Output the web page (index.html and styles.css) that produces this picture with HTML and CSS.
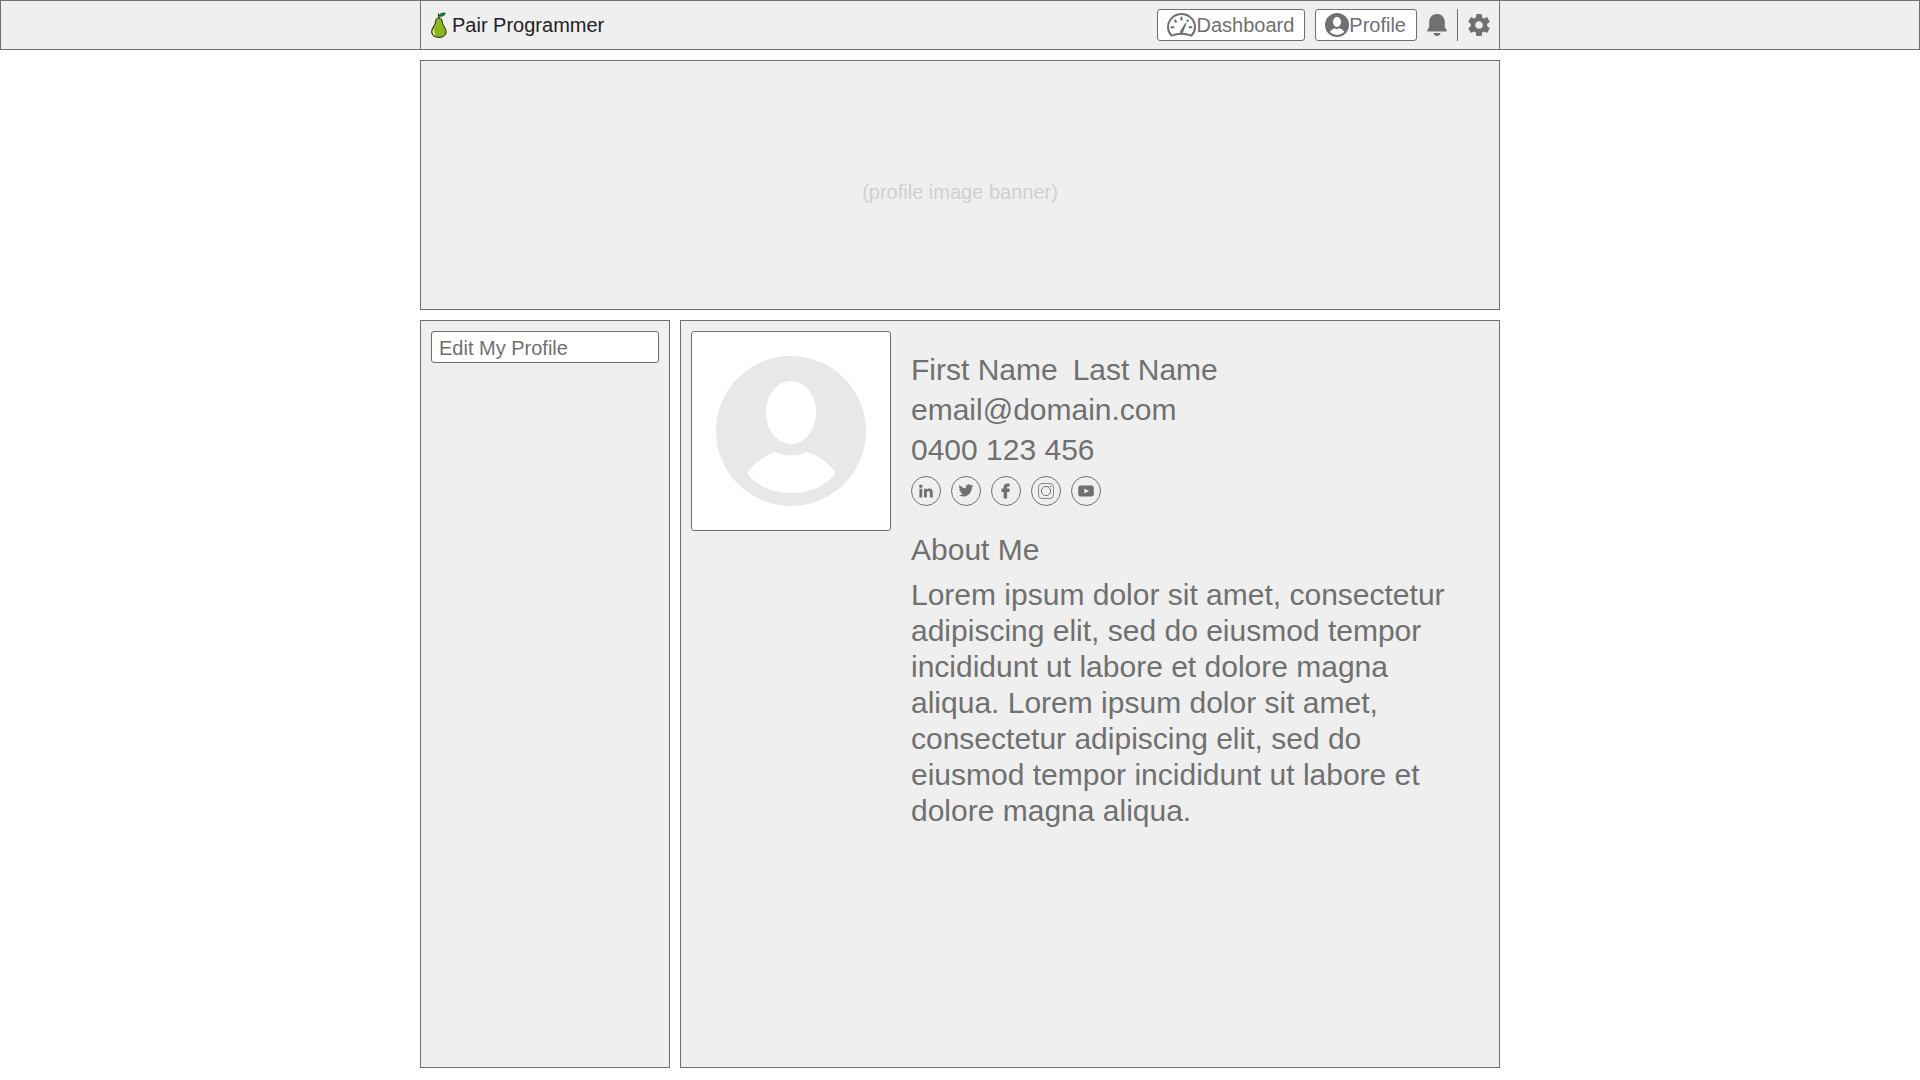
FILE: index.html
```html
<!DOCTYPE html>
<html lang="en">
<head>
  <meta charset="utf-8">
  <meta name="viewport" content="width=device-width, initial-scale=1">
  <title>Pair Programmer</title>
  <link rel="stylesheet" href="styles.css">
</head>
<body>
  <header class="site-header">
    <div class="header-inner">
      <a class="brand" href="#">
        <svg class="brand-icon" width="16" height="26" viewBox="0 0 16 26" aria-hidden="true">
          <path d="M7.8 6C5.5 6 4.6 7.500 4.500 9.600C4.400 12 3.200 13.300 1.900 15.500C.8 17.400 .4 19.300 .8 21.100C1.500 24 4.300 25.400 8 25.400C11.700 25.400 14.500 24 15 21.100C15.300 19.300 14.800 17.400 13.700 15.500C12.500 13.300 11.400 12 11.200 9.600C11 7.500 10.200 6 7.800 6Z" fill="#8ab51c" stroke="#1c2410"/>
          <path d="M2.300 18.200C1.800 20 2 21.600 3 22.700C3.900 23.400 4.200 22.600 3.600 21.400C3.100 20.200 3.100 19 3.300 17.800C3.400 16.700 2.600 17.200 2.300 18.200Z" fill="#fff"/>
          <path d="M8 6.300C7.900 4.500 8 3.300 7.300 1.500" fill="none" stroke="#1c2410" stroke-width="1.200"/>
          <path d="M8 3.700C9.500 1.200 11.800 .8 14.300 1.300C13.200 3.900 10.800 4.900 8 3.700Z" fill="#159a55" stroke="#1c2410" stroke-width=".8"/>
        </svg>
        <span>Pair Programmer</span>
      </a>
      <nav class="main-nav" aria-label="Main">
        <a class="nav-button" href="#">
          <svg width="29" height="24" viewBox="0 0 29 24" fill="none" stroke="#707070" stroke-width="2" aria-hidden="true">
            <path d="M4.600 22.600C2.400 20.300 1 17.500 1 14.200C1 7 7.100 1 14.500 1S28 7 28 14.200C28 17.500 26.600 20.300 24.400 22.600C18.500 20.400 10.500 20.400 4.600 22.600Z" stroke-linejoin="round"/>
            <path d="M14.500 3.800V7.500M7.500 6.800L9.500 9.300M21.500 6.800L19.900 8.700M3.700 14.300H7.300M21.700 14.300H25.300"/>
            <path d="M19 10.200L13.600 18.500C13.100 19.600 14.600 20.400 15.300 19.400Z" fill="#707070" stroke-width="1.200"/>
          </svg>
          <span>Dashboard</span>
        </a>
        <a class="nav-button" href="#">
          <svg width="24" height="24" viewBox="0 0 150 150" aria-hidden="true">
            <circle cx="75" cy="75" r="75" fill="#707070"/>
            <ellipse cx="75" cy="56" rx="25" ry="31" fill="#fff"/>
            <path d="M59 96Q75 103 91 96Q107 101 118 114Q120 117 118 120Q101 137 75 137T33 120Q30 117 33 114Q43 102 59 96Z" fill="#fff"/>
          </svg>
          <span>Profile</span>
        </a>
        <button class="icon-button" type="button" aria-label="Notifications">
          <svg width="20" height="22" viewBox="0 0 20 22" fill="#707070" aria-hidden="true">
            <path d="M10 0C5.500 0 2.200 3.400 2.200 7.800V13.200L.3 15.900V17.500H19.700V15.900L17.800 13.200V7.800C17.800 3.400 14.500 0 10 0Z"/>
            <path d="M6.500 19H13.500C13.200 20.900 11.900 22 10 22S6.800 20.900 6.500 19Z"/>
          </svg>
        </button>
        <span class="divider"></span>
        <button class="icon-button" type="button" aria-label="Settings">
          <svg width="22" height="22" viewBox="2 2 20 20" fill="#707070" aria-hidden="true">
            <path d="M19.430 12.980c.04-.32.07-.64.07-.98s-.03-.66-.07-.98l2.110-1.650c.19-.15.24-.42.12-.64l-2-3.460c-.12-.22-.39-.3-.61-.22l-2.490 1c-.52-.4-1.080-.73-1.690-.98l-.38-2.650C14.460 2.180 14.250 2 14 2h-4c-.25 0-.46.18-.49.42l-.38 2.650c-.61.25-1.170.59-1.690.98l-2.490-1c-.23-.09-.49 0-.61.22l-2 3.460c-.13.22-.07.49.12.64l2.110 1.650c-.04.32-.07.65-.07.98s.03.66.07.98l-2.110 1.650c-.19.15-.24.42-.12.64l2 3.460c.12.22.39.3.61.22l2.490-1c.52.4 1.080.73 1.690.98l.38 2.650c.03.24.24.42.49.42h4c.25 0 .46-.18.49-.42l.38-2.650c.61-.25 1.170-.59 1.690-.98l2.490 1c.23.09.49 0 .61-.22l2-3.460c.12-.22.07-.49-.12-.64l-2.110-1.650zM12 15.500c-1.930 0-3.500-1.570-3.500-3.500s1.570-3.500 3.500-3.500 3.500 1.570 3.500 3.500-1.570 3.500-3.500 3.500z"/>
          </svg>
        </button>
      </nav>
    </div>
  </header>

  <main class="page">
    <section class="panel banner">(profile image banner)</section>
    <aside class="panel sidebar">
      <button class="edit-button" type="button">Edit My Profile</button>
    </aside>
    <section class="panel profile">
      <div class="avatar">
        <svg width="150" height="150" viewBox="0 0 150 150" role="img" aria-label="Profile picture">
          <circle cx="75" cy="75" r="75" fill="#e8e8e8"/>
          <path d="M75 25C89 25 100 39 100 56C100 74 89 88 75 88S50 74 50 56C50 39 61 25 75 25Z" fill="#fff"/>
          <path d="M59 96Q75 103 91 96Q107 101 118 114Q120 117 118 120Q101 137 75 137T33 120Q30 117 33 114Q43 102 59 96Z" fill="#fff"/>
        </svg>
      </div>
      <div class="details">
        <h1 class="line name"><span>First Name</span><span>Last Name</span></h1>
        <p class="line">email@domain.com</p>
        <p class="line">0400 123 456</p>
        <div class="social">
          <a href="#" aria-label="LinkedIn">
            <svg width="30" height="30" viewBox="0 0 30 30" fill="#707070">
              <circle class="ring" cx="15" cy="15" r="14.500"/>
              <circle cx="9.800" cy="10.200" r="1.700"/>
              <path d="M8.400 12.700H11.200V21.500H8.400ZM13 12.700H15.700V13.900C16.300 13 17.200 12.500 18.400 12.500C21.100 12.500 21.700 14.200 21.700 16.700V21.500H18.900V17.200C18.900 16 18.800 14.900 17.400 14.900S15.800 16 15.800 17.200V21.500H13Z"/>
            </svg>
          </a>
          <a href="#" aria-label="Twitter">
            <svg width="30" height="30" viewBox="0 0 30 30" fill="#707070">
              <circle class="ring" cx="15" cy="15" r="14.500"/>
              <path transform="translate(7.500 7) scale(.62)" d="M23.953 4.570a10 10 0 01-2.825.775 4.958 4.958 0 002.163-2.723c-.951.555-2.005.959-3.127 1.184a4.920 4.920 0 00-8.384 4.482C7.690 8.095 4.067 6.130 1.640 3.162a4.822 4.822 0 00-.666 2.475c0 1.710.870 3.213 2.188 4.096a4.904 4.904 0 01-2.228-.616v.060a4.923 4.923 0 003.946 4.827 4.996 4.996 0 01-2.212.085 4.936 4.936 0 004.604 3.417 9.867 9.867 0 01-6.102 2.105c-.390 0-.779-.023-1.170-.067a13.995 13.995 0 007.557 2.209c9.053 0 13.998-7.496 13.998-13.985 0-.210 0-.420-.015-.630A9.935 9.935 0 0024 4.590z"/>
            </svg>
          </a>
          <a href="#" aria-label="Facebook">
            <svg width="30" height="30" viewBox="0 0 30 30" fill="#707070">
              <circle class="ring" cx="15" cy="15" r="14.500"/>
              <path d="M12.600 22.500V15.900H10.500V12.600H12.600V10.900C12.600 8.700 14 7.400 16.200 7.400H18.700V10.400H17.300C16.400 10.400 16.100 10.700 16.100 11.500V12.600H18.700L18.300 15.900H16.100V22.500Z"/>
            </svg>
          </a>
          <a href="#" aria-label="Instagram">
            <svg width="30" height="30" viewBox="0 0 30 30" fill="none" stroke="#707070">
              <circle class="ring" cx="15" cy="15" r="14.500"/>
              <rect x="7.500" y="7.500" width="15" height="15" rx="3.500" stroke-width=".8"/>
              <circle cx="15" cy="15" r="4.600"/>
              <circle cx="19.500" cy="10.500" r=".7" fill="#707070" stroke="none"/>
            </svg>
          </a>
          <a href="#" aria-label="YouTube">
            <svg width="30" height="30" viewBox="0 0 30 30" fill="#707070">
              <circle class="ring" cx="15" cy="15" r="14.500"/>
              <rect x="7.200" y="9.400" width="15.600" height="11.200" rx="2.500"/>
              <path d="M13.300 12.500L18 15L13.300 17.500Z" fill="#efefef"/>
            </svg>
          </a>
        </div>
        <h2 class="line about-title">About Me</h2>
        <p class="about-text">Lorem ipsum dolor sit amet, consectetur adipiscing elit, sed do eiusmod tempor incididunt ut labore et dolore magna aliqua. Lorem ipsum dolor sit amet, consectetur adipiscing elit, sed do eiusmod tempor incididunt ut labore et dolore magna aliqua.</p>
      </div>
    </section>
  </main>
</body>
</html>
```

FILE: styles.css
```css
*,
*::before,
*::after {
  box-sizing: border-box;
}

body {
  display: flex;
  flex-direction: column;
  gap: 10px;
  min-height: 100vh;
  margin: 0;
  padding-bottom: 12px;
  background: #fff;
  color: #707070;
  font-family: "Liberation Sans", Arial, sans-serif;
  font-size: 20px;
}

svg {
  display: block;
  flex: none;
}

a {
  color: inherit;
  text-decoration: none;
}

button {
  margin: 0;
  color: inherit;
  font: inherit;
  cursor: pointer;
}

.site-header {
  border: 1px solid #707070;
  background: #efefef;
}

.header-inner {
  display: flex;
  align-items: center;
  justify-content: space-between;
  max-width: 1080px;
  min-height: 48px;
  margin: 0 auto;
  padding: 0 9px 0 10px;
  border: solid #707070;
  border-width: 0 1px;
}

.brand {
  display: flex;
  align-items: center;
  gap: 5px;
  color: #222;
}

.main-nav {
  display: flex;
  align-items: center;
  gap: 10px;
}

.nav-button {
  display: flex;
  align-items: center;
  height: 32px;
  padding: 0 10px 0 9px;
  border: 1px solid #707070;
  border-radius: 3px;
  background: #fff;
}

.icon-button {
  padding: 0;
  border: 0;
  background: none;
}

.divider {
  width: 1px;
  height: 32px;
  background: #707070;
}

.page {
  display: grid;
  flex: 1;
  grid-template-columns: 250px 1fr;
  grid-template-rows: 250px 1fr;
  gap: 10px;
  width: 100%;
  max-width: 1080px;
  margin: 0 auto;
}

.panel {
  border: 1px solid #707070;
  background: #efefef;
}

.banner {
  display: flex;
  grid-column: 1 / -1;
  align-items: center;
  justify-content: center;
  padding-top: 14px;
  color: #d0d0d0;
}

.sidebar {
  padding: 10px;
}

.edit-button {
  width: 100%;
  height: 32px;
  padding: 2px 7px 0;
  border: 1px solid #707070;
  border-radius: 3px;
  background: #fff;
  text-align: left;
}

.profile {
  display: flex;
  align-items: flex-start;
  gap: 20px;
  padding: 10px 20px 10px 10px;
}

.avatar {
  display: flex;
  flex: none;
  align-items: center;
  justify-content: center;
  width: 200px;
  height: 200px;
  border: 1px solid #707070;
  border-radius: 3px;
  background: #fff;
}

.details {
  flex: 1;
  padding-top: 19px;
  font-size: 30px;
}

.line {
  margin: 0;
  font-size: 30px;
  font-weight: 400;
  line-height: 40px;
}

.name {
  display: flex;
  gap: 15px;
}

.social {
  display: flex;
  gap: 10px;
  padding: 6px 0 24px;
}

.ring {
  fill: none;
  stroke: #707070;
  stroke-width: 1px;
}

.about-title {
  margin-bottom: 7px;
}

.about-text {
  margin: 0;
  line-height: 36px;
}
```
